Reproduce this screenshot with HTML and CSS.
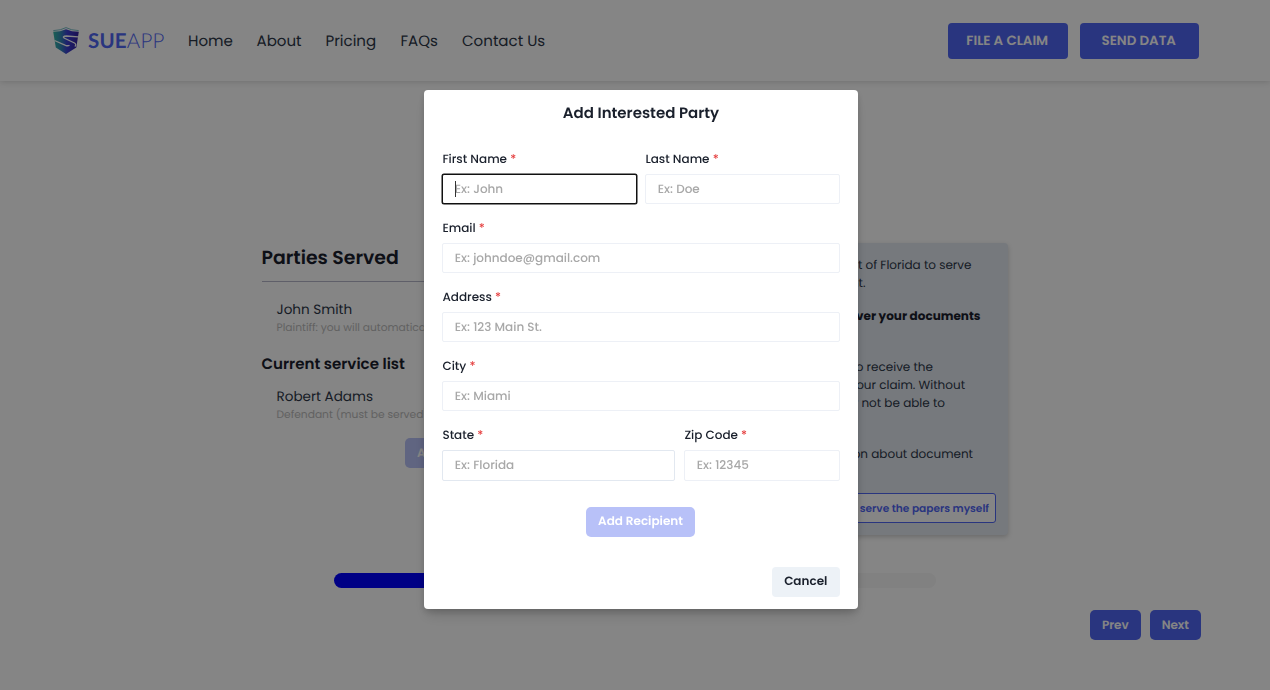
FILE: index.html
```html
<!DOCTYPE html>
<html lang="en">
<head>
<meta charset="utf-8">
<title>SueApp</title>
<link rel="stylesheet" href="styles.css">
</head>
<body>
<header class="header">
  <div class="logo">
    <svg class="logo-mark" width="28" height="28" viewBox="0 0 28 28">
      <defs><linearGradient id="shield" x1="0" x2="1" y1="0" y2="0"><stop offset="0" stop-color="#34b8a4"/><stop offset=".3" stop-color="#3288b4"/><stop offset=".55" stop-color="#3b3dd2"/><stop offset="1" stop-color="#35209c"/></linearGradient></defs>
      <path fill="none" stroke="#3c9fae" stroke-width=".7" d="M1.300 3.600Q9 3.400 14 .6Q19 3.400 26.700 3.600"/>
      <path fill="url(#shield)" d="M1.200 4.800Q8.500 4.800 14 2.200Q19.500 4.800 26.800 4.800L24.300 20.500L14 27L3.800 20.500Z"/>
      <path fill="none" stroke="#fff" stroke-width="1.300" d="M26 9.800L14.500 9Q9.500 9.300 12.500 11.300L22.500 16Q24.800 17.500 22.800 19.500M2.500 13.500L13.500 18.300Q16 19.300 17.500 18.200"/>
    </svg>
    <span class="logo-name"><b>SUE</b>APP</span>
  </div>
  <nav class="nav"><a class="n-home">Home</a><a class="n-about">About</a><a class="n-pricing">Pricing</a><a class="n-faqs">FAQs</a><a class="n-contact">Contact Us</a></nav>
  <div class="actions"><button class="btn btn-large">FILE A CLAIM</button><button class="btn btn-large">SEND DATA</button></div>
</header>
<main class="main">
  <div class="columns">
    <section class="parties">
      <h1 class="heading">Parties Served</h1>
      <div class="person"><div class="name name-john">John Smith</div><div class="role role-plaintiff">Plaintiff: you will automatically be served</div></div>
      <h2 class="subheading">Current service list</h2>
      <div class="person"><div class="name">Robert Adams</div><div class="role">Defendant (must be served)</div></div>
      <button class="btn btn-muted add-party">Add Interested Party</button>
    </section>
    <section class="info">
      <p><span class="line end-serve">We will use an agent of Florida to serve</span><span class="line end-nt">your documents to the defendant.</span></p>
      <p class="strong"><span class="line end-documents">We will deliver your documents</span><span class="line end-hidden">for you.</span></p>
      <p><span class="line end-the">All parties need to receive the</span><span class="line end-without">details of your claim. Without</span><span class="line end-able">this, you may not be able to</span><span class="line end-hidden">proceed.</span></p>
      <p><span class="line end-document">More information about document</span><span class="line end-hidden">service.</span></p>
      <div class="info-actions"><button class="btn-outline">I want to serve the papers myself</button></div>
    </section>
  </div>
  <div class="progress"><div class="progress-fill"></div></div>
  <div class="pager"><button class="btn">Prev</button><button class="btn">Next</button></div>
</main>
<div class="overlay">
  <form class="modal">
    <h3 class="modal-title">Add Interested Party</h3>
    <div class="row">
      <label class="field">
        <span class="label">First Name <i>*</i></span>
        <span class="control"><input class="input input-focused" placeholder="Ex: John"><span class="caret"></span></span>
      </label>
      <label class="field"><span class="label">Last Name <i>*</i></span><input class="input" placeholder="Ex: Doe"></label>
    </div>
    <label class="field"><span class="label">Email <i>*</i></span><input class="input" placeholder="Ex: johndoe@gmail.com"></label>
    <label class="field"><span class="label">Address <i>*</i></span><input class="input" placeholder="Ex: 123 Main St."></label>
    <label class="field"><span class="label">City <i>*</i></span><input class="input" placeholder="Ex: Miami"></label>
    <div class="row row-state">
      <label class="field"><span class="label">State <i>*</i></span><input class="input input-state" placeholder="Ex: Florida"></label>
      <label class="field"><span class="label">Zip Code <i>*</i></span><input class="input" placeholder="Ex: 12345"></label>
    </div>
    <div class="submit"><button type="button" class="btn btn-muted btn-recipient">Add Recipient</button></div>
    <div class="footer"><button type="button" class="btn btn-cancel">Cancel</button></div>
  </form>
</div>
</body>
</html>
```
FILE: styles.css
```css
* { box-sizing: border-box; }
body { margin: 0; height: 690px; overflow: hidden; background: #fff; color: #1a202c; font-family: Poppins, Inter, sans-serif; text-rendering: geometricPrecision; }
h1, h2, h3, p { margin: 0; }
button, input { font-family: inherit; text-rendering: inherit; }
button { border: 0; padding: 0; white-space: nowrap; }

.header { display: flex; align-items: center; height: 81px; padding: 0 71px 0 52px; box-shadow: 0 1px 6px rgba(0, 0, 0, .16); }
.logo { display: flex; align-items: center; width: 136px; gap: 8px; }
.logo-mark { flex: none; }
.logo-name { font: 300 20.500px Lato, sans-serif; letter-spacing: .2px; color: #5066f4; }
.logo-name b { font-weight: 700; }
.nav { display: flex; padding-top: 1px; font-size: 15.050px; color: #2d3748; }
.nav a { white-space: nowrap; }
.n-home { width: 68.500px; }
.n-about { width: 69px; }
.n-pricing { width: 75px; }
.n-faqs { width: 61.500px; }
.actions { display: flex; gap: 12px; margin-left: auto; }

.btn { height: 30px; padding: 1px 12px 0; border-radius: 5px; background: #5066f4; color: #fff; font-size: 12px; font-weight: 600; }
.btn-large { width: 119.500px; height: 36px; padding: 0 1px 0 0; border-radius: 4px; font-size: 13.400px; }
.btn-muted { background: #b8c1f8; }

.main { padding: 162px 70.500px 0 261.500px; }
.columns { display: grid; grid-template-columns: 363px 363px; gap: 20px; height: 292px; }
.heading { height: 38.500px; border-bottom: 1px solid #b6b7c9; font-size: 18.850px; line-height: 29px; font-weight: 600; }
.person { padding-left: 15px; }
.name { font-size: 13.550px; line-height: 19px; color: #2d3748; }
.name-john { padding-top: 18.500px; }
.role { font-size: 10.700px; line-height: 17px; color: #bbb; white-space: nowrap; }
.subheading { margin: 16.500px 0 11.500px; font-size: 15.050px; line-height: 23px; font-weight: 600; }
.add-party { display: block; margin: 15px 0 0 143.500px; }
.info { padding: 13.500px 12px 12px; border-radius: 4px; background: #e2e8f0; box-shadow: 0 2px 5px rgba(0, 0, 0, .2); }
.info p { margin-bottom: 15px; font-size: 12px; line-height: 18px; color: #2d3748; }
.info .strong { font-weight: 700; color: #1a202c; }
.line { display: block; text-align: right; white-space: nowrap; }
.end-serve { padding-right: 24px; }
.end-nt { padding-right: 130px; }
.end-hidden { padding-right: 150px; }
.end-documents { padding-right: 15px; }
.end-the { padding-right: 62.500px; }
.end-without { padding-right: 30.500px; }
.end-able { padding-right: 50.500px; }
.end-document { padding-right: 22.500px; }
.info-actions { display: flex; justify-content: flex-end; margin-top: -3.500px; }
.btn-outline { height: 30px; padding: 1px 5.500px 0; border: 1px solid #5066f4; border-radius: 3px; background: #fff; color: #5066f4; font-size: 10.600px; font-weight: 600; }
.progress { width: 602px; height: 15px; margin: 37.500px 0 0 72.500px; border-radius: 8px; background: #f7f7f7; overflow: hidden; }
.progress-fill { width: 50%; height: 15px; background: #00f; }
.pager { display: flex; justify-content: flex-end; gap: 9px; margin: 22.500px -1.500px 0 0; }

.overlay { position: fixed; inset: 0; background: rgba(0, 0, 0, .48); padding-top: 90px; padding-left: 424px; }
.modal { width: 434px; height: 519px; padding: 12px 18px; border-radius: 4px; background: #fff; box-shadow: 0 9px 14px -3px rgba(0, 0, 0, .15), 0 3px 6px rgba(0, 0, 0, .15); }
.modal-title { margin-bottom: 24px; text-align: center; font-size: 15px; line-height: 23px; font-weight: 600; }
.row { display: grid; grid-template-columns: 1fr 1fr; gap: 8px; }
.row-state { grid-template-columns: 233px 1fr; gap: 9px; }
.field { display: block; height: 69.100px; }
.label { display: block; height: 25px; padding-left: .4px; font-size: 12px; line-height: 21px; font-weight: 500; }
.label i { color: #e53e3e; font-style: normal; }
.control { display: block; position: relative; }
.input { display: block; width: 100%; height: 30px; padding: 1px 11.800px 0; border: 1px solid #edf0f6; border-radius: 2px; background: #fff; font-size: 12px; font-weight: 500; }
.input::placeholder { color: #a8a8a8; opacity: 1; }
.input-focused { border-color: #101010; box-shadow: 0 0 0 .5px #101010; }
.row-state .input { height: 31px; }
.input-state { border-color: #e2e8f0; }
.caret { position: absolute; left: 12.500px; top: 7px; width: 1px; height: 16px; background: #333; }
.submit { display: flex; justify-content: center; margin: 12.100px 1px 0 0; }
.footer { display: flex; justify-content: flex-end; margin-top: 30.100px; }
.btn-recipient { width: 109px; }
.btn-cancel { width: 68.500px; border-radius: 4px; background: #edf2f7; color: #1a202c; }
```
